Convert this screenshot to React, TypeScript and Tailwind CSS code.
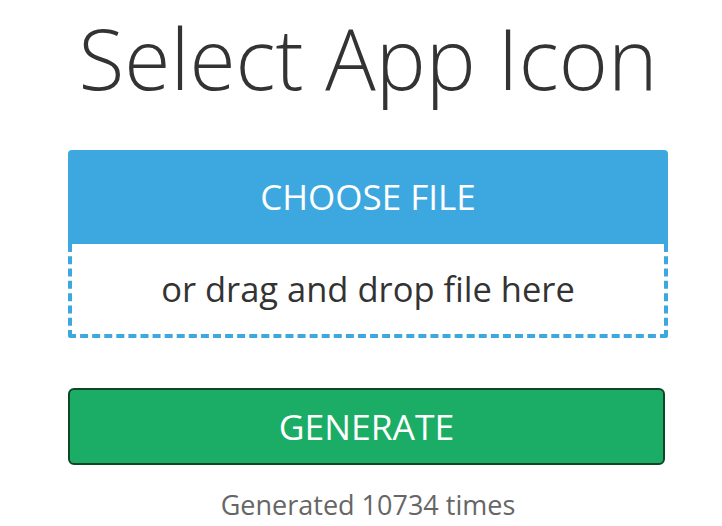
export default function App() {
  return (
    <div className="min-h-[526px] w-[722px] bg-white" style={{ fontFamily: '"Open Sans", sans-serif' }}>
      <div className="ml-[68px] w-[600px] flex flex-col items-stretch">
        <h1 className="text-center text-[84px] leading-[116px] font-light text-[#333]">
          Select App Icon
        </h1>

        {/* Upload area */}
        <div className="mt-[34px] flex flex-col">
          <button className="h-[94px] rounded-t-[4px] bg-[#3da8e0] text-white text-[35px] leading-[94px]">
            CHOOSE FILE
          </button>
          <div className="h-[94px] border-4 border-t-0 border-dashed border-[#3da8e0] rounded-b-[3px] flex items-center justify-center">
            <span className="text-[34.5px] text-[#333]">or drag and drop file here</span>
          </div>
        </div>

        {/* Generate */}
        <button className="mt-[50px] h-[77px] w-[597px] rounded-[6px] border-2 border-[#0f4726] bg-[#1bad66] text-white text-[35.5px]">
          GENERATE
        </button>

        <p className="mt-[20px] text-center text-[27px] text-[#666]">Generated 10734 times</p>
      </div>
    </div>
  );
}
